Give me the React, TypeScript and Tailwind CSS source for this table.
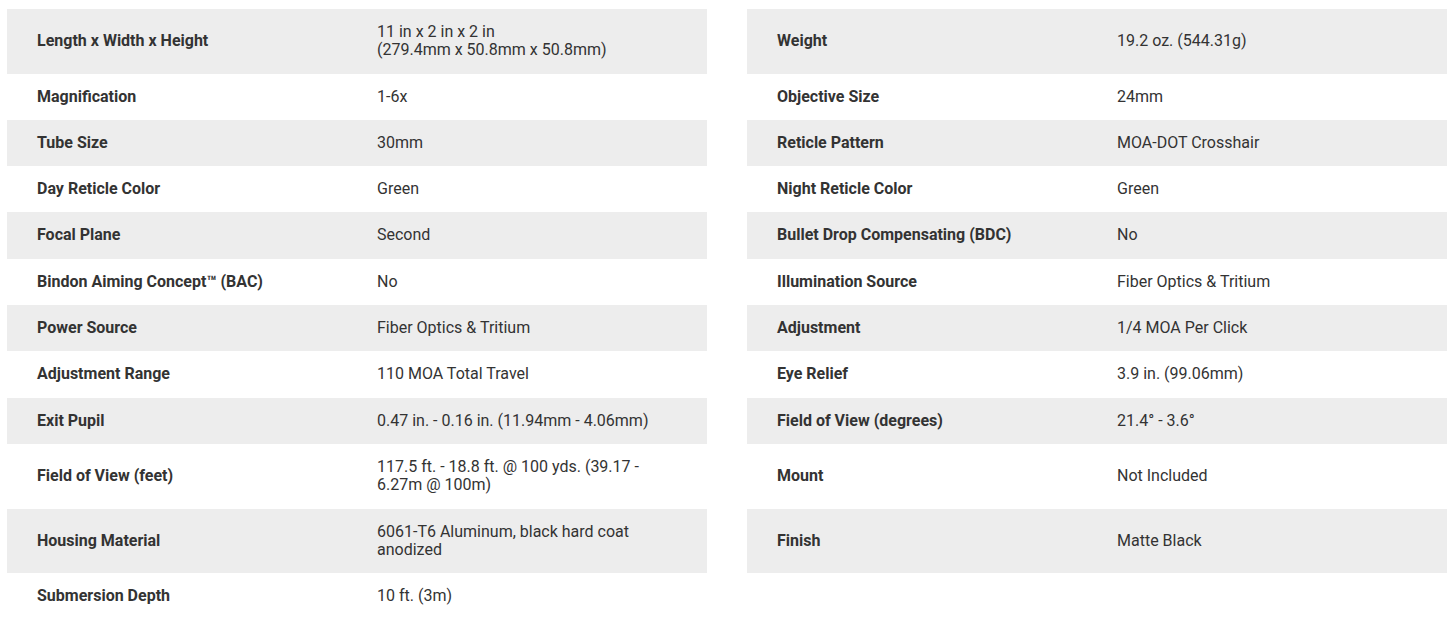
const left: [string, string][] = [
  ['Length x Width x Height', '11 in x 2 in x 2 in\n(279.4mm x 50.8mm x 50.8mm)'],
  ['Magnification', '1-6x'],
  ['Tube Size', '30mm'],
  ['Day Reticle Color', 'Green'],
  ['Focal Plane', 'Second'],
  ['Bindon Aiming Concept™ (BAC)', 'No'],
  ['Power Source', 'Fiber Optics & Tritium'],
  ['Adjustment Range', '110 MOA Total Travel'],
  ['Exit Pupil', '0.47 in. - 0.16 in. (11.94mm - 4.06mm)'],
  ['Field of View (feet)', '117.5 ft. - 18.8 ft. @ 100 yds. (39.17 - 6.27m @ 100m)'],
  ['Housing Material', '6061-T6 Aluminum, black hard coat anodized'],
  ['Submersion Depth', '10 ft. (3m)'],
];

const right: [string, string][] = [
  ['Weight', '19.2 oz. (544.31g)'],
  ['Objective Size', '24mm'],
  ['Reticle Pattern', 'MOA-DOT Crosshair'],
  ['Night Reticle Color', 'Green'],
  ['Bullet Drop Compensating (BDC)', 'No'],
  ['Illumination Source', 'Fiber Optics & Tritium'],
  ['Adjustment', '1/4 MOA Per Click'],
  ['Eye Relief', '3.9 in. (99.06mm)'],
  ['Field of View (degrees)', '21.4° - 3.6°'],
  ['Mount', 'Not Included'],
  ['Finish', 'Matte Black'],
];

function Cell({ item, shaded }: { item?: [string, string]; shaded: boolean }) {
  if (!item) return <div className="w-[700px]" />;
  return (
    <div className={`flex w-[700px] items-center py-[14px] ${shaded ? 'bg-[#ededed]' : 'bg-white'}`}>
      <div className="w-[370px] shrink-0 pl-[30px] pr-4 font-bold text-[#333]">{item[0]}</div>
      <div className="w-[330px] whitespace-pre-line pr-[30px] text-[#333]">{item[1]}</div>
    </div>
  );
}

export default function App() {
  return (
    <div
      className="min-h-screen bg-white pt-[9px] pl-[7px] text-[16px] leading-[18.3px]"
      style={{ fontFamily: 'Roboto, "Liberation Sans", sans-serif' }}
    >
      {left.map((item, i) => (
        <div key={i} className="flex gap-10">
          <Cell item={item} shaded={i % 2 === 0} />
          <Cell item={right[i]} shaded={i % 2 === 0} />
        </div>
      ))}
    </div>
  );
}
